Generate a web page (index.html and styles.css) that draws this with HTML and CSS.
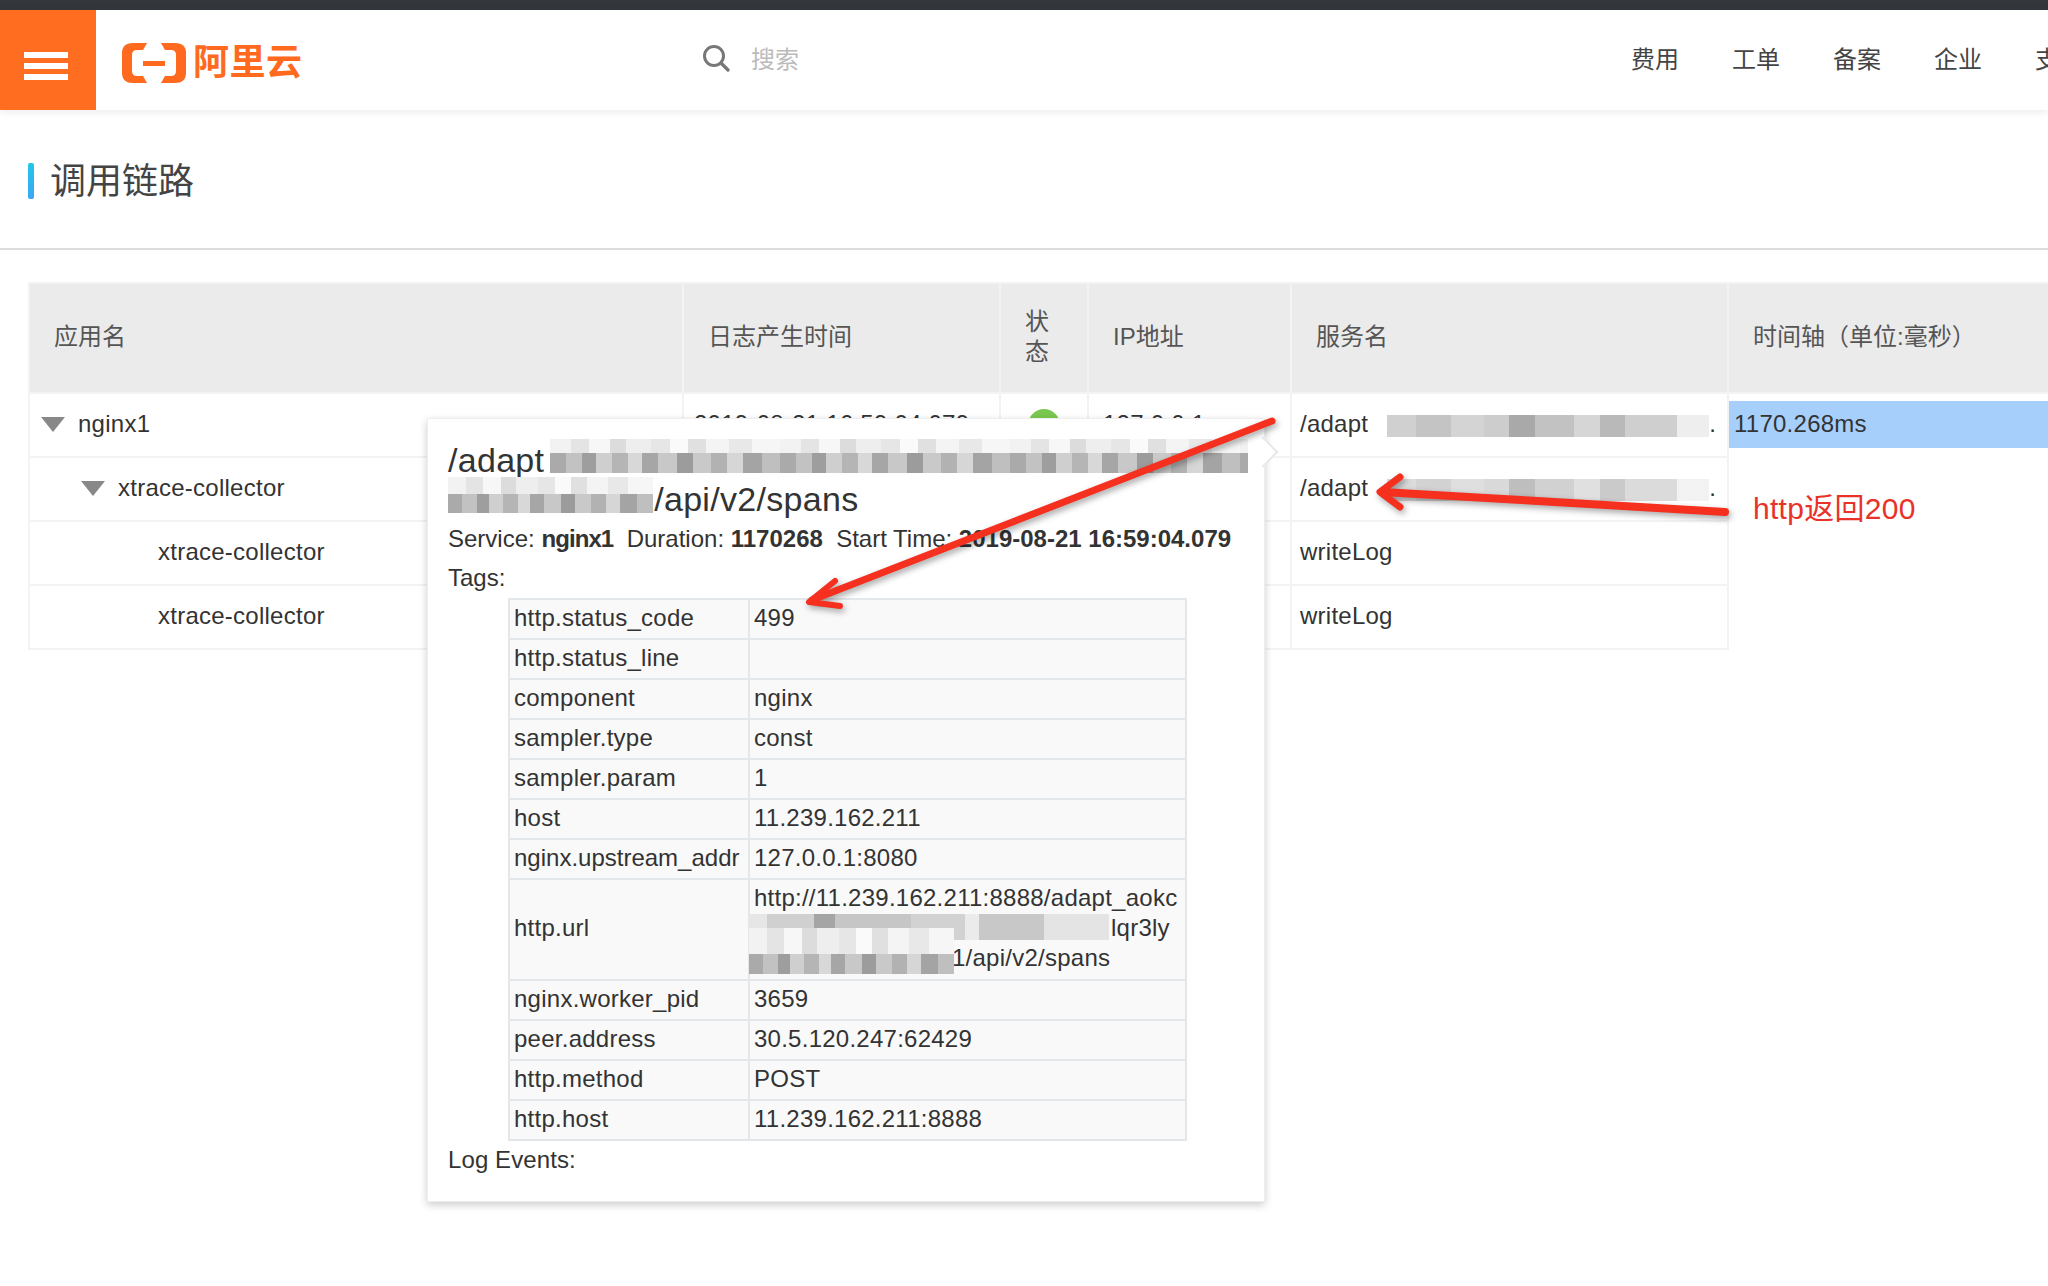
FILE: index.html
```html
<!DOCTYPE html>
<html lang="zh-CN">
<head>
    <meta charset="UTF-8">
    <title>调用链路</title>
    <link rel="stylesheet" href="styles.css">
</head>
<body>
    <div class="topbar"></div>
    <header class="header">
        <div class="burger"><span></span><span></span><span></span></div>
        <div class="logo">
            <svg width="64" height="40" viewBox="0 0 64 40">
                <path d="M25 0H11Q0 0 0 10V30Q0 40 11 40H25L21 33H15Q10 33 10 28V12Q10 7 15 7H21Z" fill="#ff6a1f"/>
                <path d="M39 0H53Q64 0 64 10V30Q64 40 53 40H39L43 33H49Q54 33 54 28V12Q54 7 49 7H43Z" fill="#ff6a1f"/>
                <rect x="21" y="18" width="22" height="5" fill="#ff6a1f"/>
            </svg>
            <span class="logo-text">阿里云</span>
        </div>
        <div class="search">
            <svg width="30" height="30" viewBox="0 0 30 30">
                <circle cx="13" cy="13" r="9.5" fill="none" stroke="#777" stroke-width="3"/>
                <path d="M20 20L27 27" stroke="#777" stroke-width="3.4" stroke-linecap="round"/>
            </svg>
            <span class="search-text">搜索</span>
        </div>
        <nav class="nav">
            <a>费用</a>
            <a>工单</a>
            <a>备案</a>
            <a>企业</a>
            <a>支持</a>
        </nav>
    </header>

    <div class="page-title">
        <span class="title-bar"></span>
        <h1>调用链路</h1>
    </div>

    <table class="trace">
        <colgroup>
            <col class="col-app"><col class="col-date"><col class="col-state">
            <col class="col-ip"><col class="col-service"><col class="col-time">
        </colgroup>
        <thead>
            <tr>
                <th>应用名</th>
                <th>日志产生时间</th>
                <th>状态</th>
                <th>IP地址</th>
                <th>服务名</th>
                <th>时间轴（单位:毫秒）</th>
            </tr>
        </thead>
        <tbody>
            <tr>
                <td class="level-0"><i class="caret"></i>nginx1</td>
                <td class="date">2019-08-21 16:59:04.079</td>
                <td><div class="dot"></div></td>
                <td class="ip">127.0.0.1</td>
                <td class="service">/adapt<span class="mosaic mosaic-row"></span>.</td>
                <td class="time"><div class="time-bar">1170.268ms</div></td>
            </tr>
            <tr>
                <td class="level-1"><i class="caret"></i>xtrace-collector</td>
                <td></td><td></td><td></td>
                <td class="service">/adapt<span class="mosaic mosaic-row mosaic-light"></span>.</td>
                <td class="time"></td>
            </tr>
            <tr>
                <td class="level-2">xtrace-collector</td>
                <td></td><td></td><td></td>
                <td class="service">writeLog</td>
                <td class="time"></td>
            </tr>
            <tr>
                <td class="level-2">xtrace-collector</td>
                <td></td><td></td><td></td>
                <td class="service">writeLog</td>
                <td class="time"></td>
            </tr>
        </tbody>
    </table>

    <div class="popover">
        <i class="popover-arrow"></i>
        <div class="pop-title">
            <div class="pop-line">/adapt_<span class="mosaic mosaic-title"></span></div>
            <div class="pop-line"><span class="mosaic mosaic-title2"></span>1/api/v2/spans</div>
        </div>
        <div class="pop-meta">Service: <b>nginx1</b>&nbsp; Duration: <b>1170268</b>&nbsp; Start Time: <b>2019-08-21 16:59:04.079</b></div>
        <div class="pop-label">Tags:</div>
        <table class="tags">
            <tr><td class="tag-key">http.status_code</td><td>499</td></tr>
            <tr><td class="tag-key">http.status_line</td><td></td></tr>
            <tr><td class="tag-key">component</td><td>nginx</td></tr>
            <tr><td class="tag-key">sampler.type</td><td>const</td></tr>
            <tr><td class="tag-key">sampler.param</td><td>1</td></tr>
            <tr><td class="tag-key">host</td><td>11.239.162.211</td></tr>
            <tr><td class="tag-key tag-long">nginx.upstream_addr</td><td>127.0.0.1:8080</td></tr>
            <tr>
                <td class="tag-key">http.url</td>
                <td>
                    <div>http://11.239.162.211:8888/adapt_aokc</div>
                    <div class="url-line"><span class="mosaic mosaic-url"></span>lqr3ly</div>
                    <div class="url-line"><span class="mosaic mosaic-url2"></span>1/api/v2/spans</div>
                </td>
            </tr>
            <tr><td class="tag-key">nginx.worker_pid</td><td>3659</td></tr>
            <tr><td class="tag-key">peer.address</td><td>30.5.120.247:62429</td></tr>
            <tr><td class="tag-key">http.method</td><td>POST</td></tr>
            <tr><td class="tag-key">http.host</td><td>11.239.162.211:8888</td></tr>
        </table>
        <div class="pop-label pop-log">Log Events:</div>
    </div>

    <!-- red annotation arrows on top of the screenshot -->
    <svg class="arrows" width="2048" height="1286" viewBox="0 0 2048 1286">
        <g fill="none" stroke="#f5301f" stroke-linecap="round" stroke-linejoin="round">
            <path d="M1272 421L812 600" stroke-width="7"/>
            <path d="M835 581L809 602L840 606" stroke-width="6"/>
            <path d="M1725 512L1382 492" stroke-width="8"/>
            <path d="M1400 477L1380 492L1400 507" stroke-width="7"/>
        </g>
    </svg>
    <div class="note">http返回200</div>
</body>
</html>
```

FILE: styles.css
```css
html, body {
    margin: 0;
    padding: 0;
    height: 1286px;
    overflow: hidden;
    background: #fff;
}
body {
    position: relative;
    width: 2048px;
    font-family: "Liberation Sans", "Noto Sans CJK SC", sans-serif;
    font-size: 24px;
    color: #333;
}

/* header */
.topbar {
    height: 10px;
    background: #33373b;
}
.header {
    display: flex;
    align-items: center;
    height: 100px;
    background: #fff;
    box-shadow: 0 2px 8px rgba(0, 0, 0, 0.08);
    white-space: nowrap;
}
.burger {
    flex: none;
    display: flex;
    flex-direction: column;
    justify-content: center;
    gap: 5px;
    width: 96px;
    height: 100px;
    padding-left: 24px;
    padding-top: 12px;
    box-sizing: border-box;
    background: #ff6d20;
}
.burger span {
    display: block;
    width: 44px;
    height: 6px;
    background: #fff;
}
.logo {
    flex: none;
    display: flex;
    align-items: center;
    gap: 7px;
    margin-left: 26px;
    width: 579px;
    margin-top: 5px;
}
.logo-text {
    font-size: 36px;
    font-weight: 700;
    line-height: 40px;
    letter-spacing: 0.5px;
    color: #ff6a1f;
}
.search {
    flex: none;
    display: flex;
    align-items: center;
    gap: 20px;
    width: 930px;
    margin-top: -5px;
}
.search-text {
    color: #bbb;
}
.nav {
    flex: none;
    display: flex;
    gap: 53px;
    margin-top: -6px;
    color: #444;
}

/* page title */
.page-title {
    display: flex;
    align-items: center;
    height: 138px;
    padding-left: 28px;
    border-bottom: 2px solid #ddd;
}
.title-bar {
    width: 6px;
    height: 36px;
    margin-top: 4px;
    border-radius: 2px;
    background: linear-gradient(#22c7e6, #3ba6f5);
}
.page-title h1 {
    margin: -2px 0 0 16px;
    font-size: 36px;
    font-weight: 400;
    color: #444;
}

/* trace table */
.trace {
    margin: 32px 0 0 28px;
    width: 2100px;
    table-layout: fixed;
    border-collapse: collapse;
    letter-spacing: 0.25px;
}
.col-app { width: 654px; }
.col-date { width: 317px; }
.col-state { width: 88px; }
.col-ip { width: 203px; }
.col-service { width: 437px; }
.col-time { width: 401px; }
.trace th {
    height: 110px;
    padding: 0 24px 2px;
    box-sizing: border-box;
    background: #ebebeb;
    border: 2px solid #f3f3f3;
    font-weight: 400;
    text-align: left;
    line-height: 30px;
    letter-spacing: 0;
    color: #555;
}
.trace td {
    height: 64px;
    padding: 0 8px 2px;
    box-sizing: border-box;
    border: 2px solid #f3f3f3;
    white-space: nowrap;
}
.trace td.time {
    padding: 0;
    border: none;
}
.time-bar {
    height: 47px;
    margin-top: -2px;
    padding-left: 5px;
    line-height: 45px;
    background: #a6d0fb;
}
.level-0 { padding-left: 11px !important; }
.level-1 { padding-left: 51px !important; }
.level-2 { padding-left: 128px !important; }
.caret {
    display: inline-block;
    width: 0;
    height: 0;
    margin-right: 13px;
    border-left: 12px solid transparent;
    border-right: 12px solid transparent;
    border-top: 15px solid #888;
}
.date { padding-left: 10px !important; }
.ip { padding-left: 14px !important; }
.dot {
    width: 32px;
    height: 32px;
    margin: 2px auto 0;
    border-radius: 50%;
    background: #7ac74f;
}

/* pixelated parts of the screenshot */
.mosaic {
    position: relative;
    z-index: 1;
    display: inline-block;
    vertical-align: middle;
    background-image:
        linear-gradient(90deg, #aaa 0 7%, #c2c2c2 7% 14%, #9e9e9e 14% 20%, #cfcfcf 20% 27%, #b5b5b5 27% 34%, #d8d8d8 34% 40%, #a6a6a6 40% 47%, #c8c8c8 47% 55%, #9c9c9c 55% 62%, #c9c9c9 62% 70%, #b2b2b2 70% 77%, #d6d6d6 77% 84%, #a4a4a4 84% 92%, #bfbfbf 92% 100%),
        linear-gradient(90deg, #f2f2f2 0 9%, #e4e4e4 9% 17%, #f7f7f7 17% 26%, #dcdcdc 26% 33%, #eee 33% 44%, #e6e6e6 44% 52%, #fafafa 52% 60%, #e0e0e0 60% 68%, #f4f4f4 68% 78%, #e8e8e8 78% 88%, #f6f6f6 88% 100%);
    background-repeat: repeat-x;
    background-position: left bottom, left top;
}
.mosaic-row {
    width: 322px;
    height: 22px;
    margin: 0 0 0 19px;
    background-image:
        linear-gradient(90deg, #d0d0d0 0 9%, #c4c4c4 9% 20%, #d4d4d4 20% 30%, #cdcdcd 30% 38%, #a9a9a9 38% 46%, #c2c2c2 46% 58%, #d6d6d6 58% 66%, #b9b9b9 66% 74%, #cfcfcf 74% 90%, #eee 90% 100%);
    background-size: 100% 100%;
}
.mosaic-light {
    opacity: 0.75;
}
.mosaic-title {
    width: 698px;
    height: 34px;
    margin: -14px 0 0 -14px;
    background-size: 230px 20px, 230px 14px;
}
.mosaic-title2 {
    width: 205px;
    height: 36px;
    margin-top: -14px;
    margin-right: -18px;
    background-size: 205px 19px, 205px 17px;
}
.mosaic-url {
    width: 360px;
    height: 26px;
    margin: -6px 2px 0 -5px;
    background-image:
        linear-gradient(90deg, #e6e6e6 0 5%, #d0d0d0 5% 18%, #a5a5a5 18% 24%, #c6c6c6 24% 45%, #d2d2d2 45% 60%, #ebebeb 60% 64%, #c8c8c8 64% 82%, #e4e4e4 82% 100%);
    background-size: 100% 100%;
}
.mosaic-url2 {
    width: 205px;
    height: 46px;
    margin-left: -5px;
    margin-right: -2px;
    margin-top: -18px;
    background-size: 205px 20px, 205px 26px;
}

/* popover */
.popover {
    position: absolute;
    left: 427px;
    top: 418px;
    width: 838px;
    height: 784px;
    box-sizing: border-box;
    padding: 22px 20px 0;
    background: #fff;
    border: 1px solid #eee;
    box-shadow: 0 3px 8px rgba(0, 0, 0, 0.2);
}
.popover-arrow {
    position: absolute;
    right: -10px;
    top: 22px;
    width: 20px;
    height: 20px;
    background: #fff;
    border-top: 2px solid #e8e8e8;
    border-right: 2px solid #e8e8e8;
    transform: rotate(45deg);
}
.pop-title {
    font-size: 34px;
    line-height: 39px;
    letter-spacing: 0.3px;
    color: #333;
}
.pop-line {
    white-space: nowrap;
    height: 39px;
}
.pop-meta {
    line-height: 40px;
    white-space: nowrap;
}
.pop-meta b {
    font-weight: 700;
}
.pop-meta b:first-child {
    letter-spacing: -0.9px;
}
.pop-label {
    line-height: 40px;
    margin-top: -1px;
}
.tags {
    margin: 0 0 0 60px;
    width: 679px;
    table-layout: fixed;
    border-collapse: collapse;
    background: #f9f9f9;
    letter-spacing: 0.25px;
}
.tags td {
    padding: 3px 4px 5px;
    border: 2px solid #e4e7ea;
    line-height: 30px;
    white-space: nowrap;
}
.tag-key {
    width: 230px;
}
.tag-long {
    letter-spacing: 0;
}
.pop-log {
    letter-spacing: 0.1px;
}

/* annotations */
.arrows {
    position: absolute;
    left: 0;
    top: 0;
    z-index: 2;
    filter: drop-shadow(2px 3px 3px rgba(0, 0, 0, 0.35));
}
.note {
    position: absolute;
    left: 1753px;
    top: 491px;
    font-size: 30px;
    line-height: 36px;
    letter-spacing: 0.3px;
    color: #e8322a;
}
```
